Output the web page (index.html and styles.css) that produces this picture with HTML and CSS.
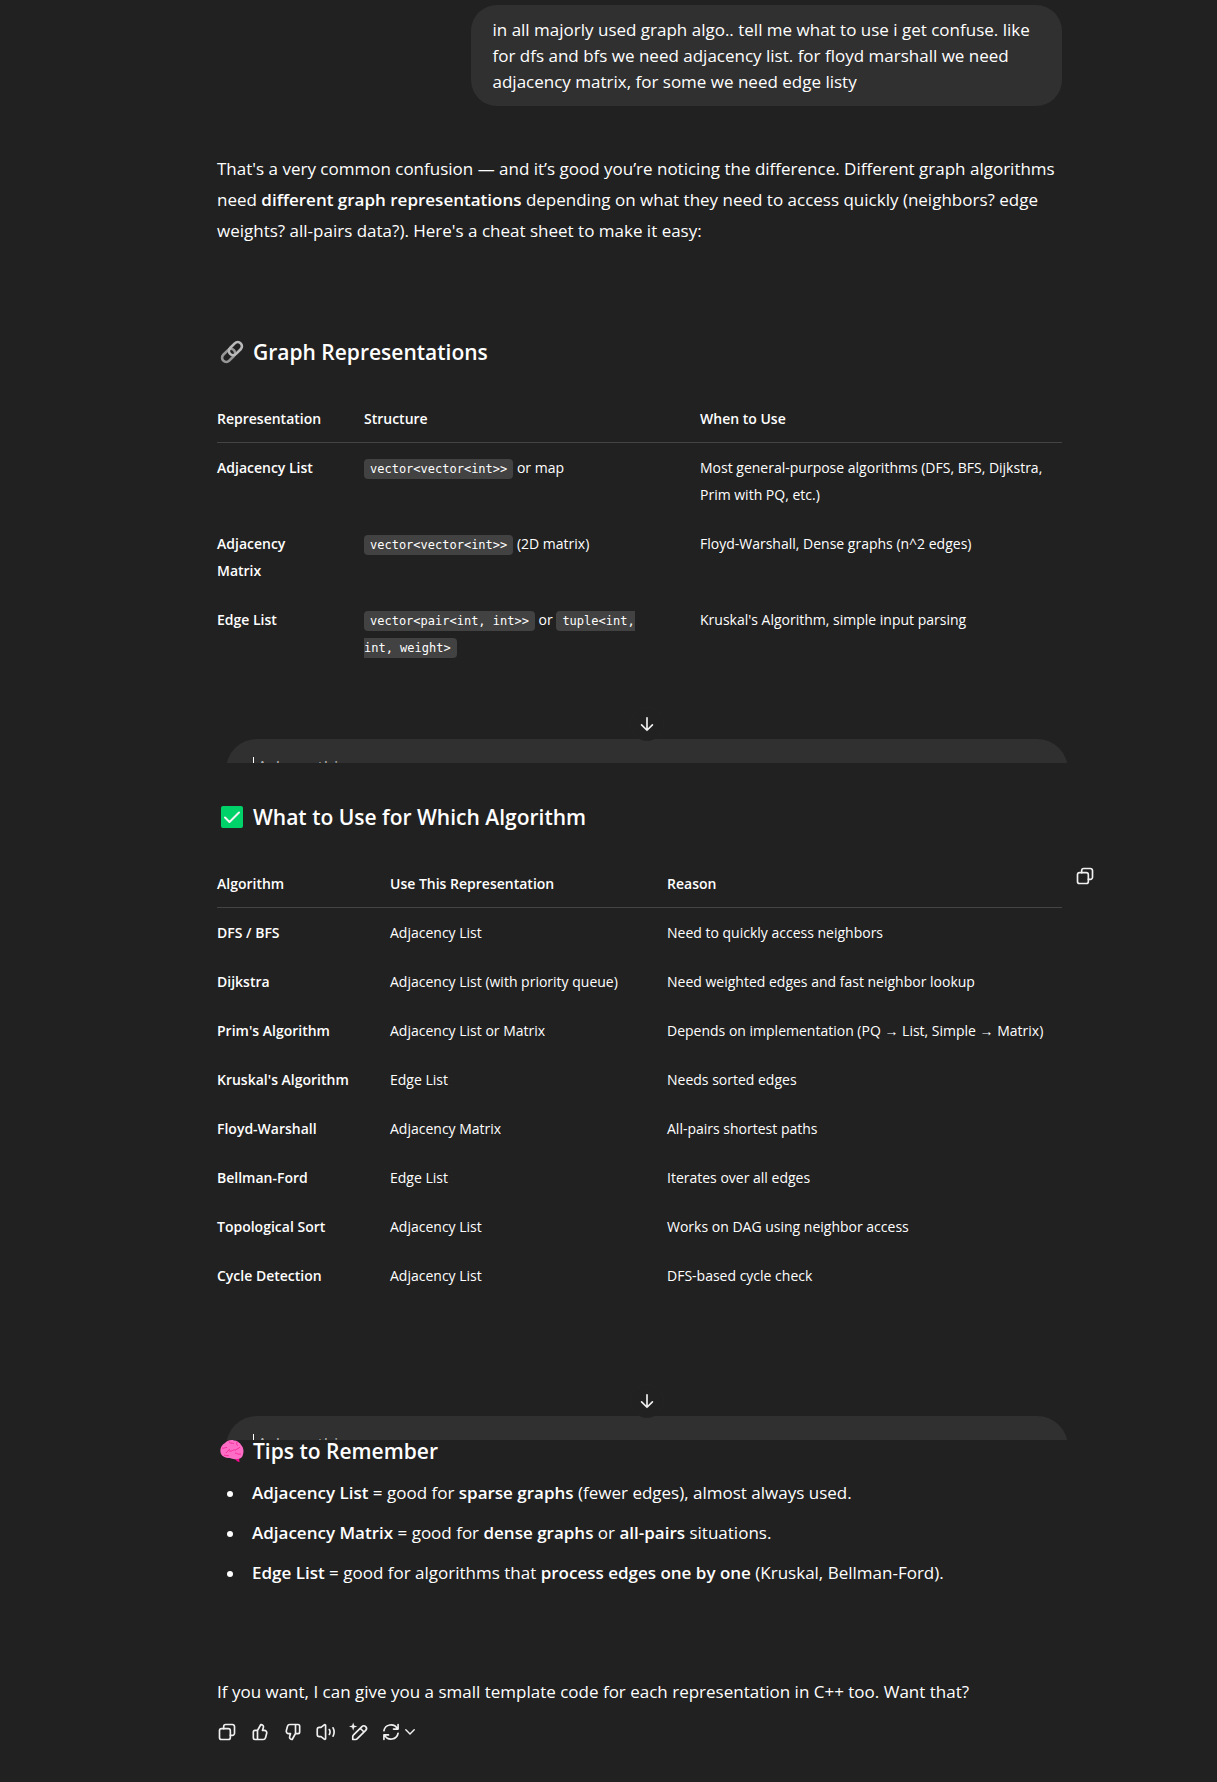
FILE: index.html
```
<!DOCTYPE html>
<html lang="en">
<head>
<meta charset="utf-8">
<meta name="viewport" content="width=device-width, initial-scale=1">
<title>Graph representations</title>
<link rel="stylesheet" href="styles.css">
</head>
<body>
<svg class="sprite" aria-hidden="true">
  <symbol id="i-copy" viewBox="0 0 24 24"><rect x="3" y="8" width="13" height="13" rx="2.5"/><path d="M8 8V5.500A2.500 2.500 0 0 1 10.500 3H18.500A2.500 2.500 0 0 1 21 5.500V13.500A2.500 2.500 0 0 1 18.500 16H16"/></symbol>
  <symbol id="i-thumb" viewBox="0 0 24 24"><path d="M9 10.200 13 3l.5.060C15.600 3.330 16.600 5 15.950 6.900L15 10H17.100C19.100 10 20.500 11.900 19.970 13.800L18.600 18.800A3 3 0 0 1 15.700 21H6A2 2 0 0 1 4 19V12A2 2 0 0 1 6 10H9V21"/></symbol>
  <symbol id="i-arrow" viewBox="0 0 24 24"><path d="M12 4.500V19.500M5.500 13 12 19.500 18.500 13"/></symbol>
</svg>
<main class="thread">
  <p class="bubble">in all majorly used graph algo.. tell me what to use i get confuse. like for dfs and bfs we need adjacency list. for floyd marshall we need adjacency matrix, for some we need edge listy</p>

  <article class="answer">
    <p class="intro">That's a very common confusion — and it’s good you’re noticing the difference. Different graph algorithms need <strong>different graph representations</strong> depending on what they need to access quickly (neighbors? edge weights? all-pairs data?). Here's a cheat sheet to make it easy:</p>

    <h3 class="title title-first">
      <svg class="emoji" viewBox="0 0 22 22" aria-hidden="true"><g fill="none" stroke-width="2.600"><rect x="-7.500" y="-4.200" width="15" height="8.400" rx="4.200" transform="translate(7.600 14.400) rotate(-45)" stroke="#969696"/><rect x="-7.500" y="-4.200" width="15" height="8.400" rx="4.200" transform="translate(14.400 7.600) rotate(-45)" stroke="#b9b9b9"/></g></svg>
      Graph Representations
    </h3>
    <table class="grid grid-structures">
      <colgroup><col class="name"><col class="middle"><col></colgroup>
      <thead><tr><th scope="col">Representation</th><th scope="col">Structure</th><th scope="col">When to Use</th></tr></thead>
      <tbody>
        <tr><th scope="row">Adjacency List</th><td><code>vector&lt;vector&lt;int&gt;&gt;</code> or map</td><td>Most general-purpose algorithms (DFS, BFS, Dijkstra, Prim with PQ, etc.)</td></tr>
        <tr><th scope="row">Adjacency Matrix</th><td><code>vector&lt;vector&lt;int&gt;&gt;</code> (2D matrix)</td><td>Floyd-Warshall, Dense graphs (n^2 edges)</td></tr>
        <tr><th scope="row">Edge List</th><td><code>vector&lt;pair&lt;int, int&gt;&gt;</code> or <code>tuple&lt;int, int, weight&gt;</code></td><td>Kruskal's Algorithm, simple input parsing</td></tr>
      </tbody>
    </table>

    <div class="dock">
      <button class="down" type="button" aria-label="Scroll to bottom"><svg class="icon icon-arrow"><use href="#i-arrow"/></svg></button>
      <div class="peek"><div class="composer"><span class="caret"></span><input class="prompt" type="text" placeholder="Ask anything" aria-label="Message"></div></div>
    </div>

    <h3 class="title title-second">
      <svg class="emoji" viewBox="0 0 22 22" aria-hidden="true"><rect width="22" height="22" rx="2" fill="#00d26a"/><path d="M4 11.500 8.500 16 18 6.500" fill="none" stroke="#f4f4f4" stroke-width="2" stroke-linecap="round" stroke-linejoin="round"/></svg>
      What to Use for Which Algorithm
    </h3>
    <div class="grid-wrap">
      <table class="grid grid-algorithms">
        <colgroup><col class="name"><col class="middle"><col></colgroup>
        <thead><tr><th scope="col">Algorithm</th><th scope="col">Use This Representation</th><th scope="col">Reason</th></tr></thead>
        <tbody>
          <tr><th scope="row">DFS / BFS</th><td>Adjacency List</td><td>Need to quickly access neighbors</td></tr>
          <tr><th scope="row">Dijkstra</th><td>Adjacency List (with priority queue)</td><td>Need weighted edges and fast neighbor lookup</td></tr>
          <tr><th scope="row">Prim's Algorithm</th><td>Adjacency List or Matrix</td><td>Depends on implementation (PQ → List, Simple → Matrix)</td></tr>
          <tr><th scope="row">Kruskal's Algorithm</th><td>Edge List</td><td>Needs sorted edges</td></tr>
          <tr><th scope="row">Floyd-Warshall</th><td>Adjacency Matrix</td><td>All-pairs shortest paths</td></tr>
          <tr><th scope="row">Bellman-Ford</th><td>Edge List</td><td>Iterates over all edges</td></tr>
          <tr><th scope="row">Topological Sort</th><td>Adjacency List</td><td>Works on DAG using neighbor access</td></tr>
          <tr><th scope="row">Cycle Detection</th><td>Adjacency List</td><td>DFS-based cycle check</td></tr>
        </tbody>
      </table>
      <button class="tool copy-table" type="button" aria-label="Copy table"><svg class="icon"><use href="#i-copy"/></svg></button>
    </div>

    <div class="dock dock-late">
      <button class="down" type="button" aria-label="Scroll to bottom"><svg class="icon icon-arrow"><use href="#i-arrow"/></svg></button>
      <div class="peek"><div class="composer"><span class="caret"></span><input class="prompt" type="text" placeholder="Ask anything" aria-label="Message"></div></div>
    </div>

    <h3 class="title title-tips">
      <svg class="emoji" viewBox="0 0 22 22" aria-hidden="true"><path d="M13 17h5l.5 5c-2 0-4-2-5.500-5z" fill="#f70a8d"/><path d="M-.5 12C-1 8 1 4.500 4 3 6 .5 10-.5 13 .5c3 0 6 2 7.500 5 2 2 2.500 6 1.500 9-.5 3-3 4.500-6 4.500-3 .5-5 0-7-1C4 18 0 16-.5 12z" fill="#ff6dc6"/><path d="M1 8c2 1 3-1 5-.5M8 1.500c0 2 3 1.500 5 2M16 2c-1 2 0 3 1 4M5 13c1-2 3-2 3.500-4M8 11c3 1 4-2 7-1 1-2 3-1 4-3M14 13c2 0 3 2 6 1M3 15c2 1 4 0 5 1" fill="none" stroke="#f92f9b" stroke-width="1"/></svg>
      Tips to Remember
    </h3>
    <ul class="tips">
      <li><strong>Adjacency List</strong> = good for <strong>sparse graphs</strong> (fewer edges), almost always used.</li>
      <li><strong>Adjacency Matrix</strong> = good for <strong>dense graphs</strong> or <strong>all-pairs</strong> situations.</li>
      <li><strong>Edge List</strong> = good for algorithms that <strong>process edges one by one</strong> (Kruskal, Bellman-Ford).</li>
    </ul>

    <p class="closing">If you want, I can give you a small template code for each representation in C++ too. Want that?</p>
  </article>

  <div class="tools">
    <button class="tool" type="button" aria-label="Copy"><svg class="icon"><use href="#i-copy"/></svg></button>
    <button class="tool" type="button" aria-label="Good response"><svg class="icon"><use href="#i-thumb"/></svg></button>
    <button class="tool" type="button" aria-label="Bad response"><svg class="icon icon-flip"><use href="#i-thumb"/></svg></button>
    <button class="tool" type="button" aria-label="Read aloud"><svg class="icon" viewBox="0 0 24 24"><path d="M11.500 4.200V19.800C11.500 20.700 10.600 21 9.900 20.500L6 17.500H4A2.500 2.500 0 0 1 1.500 15V9A2.500 2.500 0 0 1 4 6.500H6L9.900 3.500C10.600 3 11.500 3.300 11.500 4.200Z"/><path d="M16 9A6 6 0 0 1 16 15M20.500 7A11 11 0 0 1 20.500 17"/></svg></button>
    <button class="tool" type="button" aria-label="Edit in canvas"><svg class="icon" viewBox="0 0 24 24"><path d="M5.500 15.500 15.500 5.500A3.180 3.180 0 0 1 20 10L10 20A3 3 0 0 1 8 21H4.500V17.500A3 3 0 0 1 5.500 15.500ZM13.500 7.500 18 12"/><path class="solid" d="M5 .5 6.200 4.300 10 5.500 6.200 6.700 5 10.500 3.800 6.700 0 5.500 3.800 4.300Z"/></svg></button>
    <button class="tool tool-menu" type="button" aria-label="Try again"><svg class="icon" viewBox="0 0 24 24"><path d="M3.500 10.500A8.600 8.600 0 0 1 19.500 8M20.500 3V8.500H15M20.500 13.500A8.600 8.600 0 0 1 4.500 16M3.500 21V15.500H9"/></svg><svg class="chevron" viewBox="0 0 10 6"><path d="M.8 .8 5 5 9.200 .8"/></svg></button>
  </div>
</main>
</body>
</html>
```
FILE: styles.css
```
* {
  box-sizing: border-box;
}

body {
  margin: 0;
  padding: 5px 0 34px 62px;
  background: #212121;
  color: #fff;
  font: 17px/31px "Open Sans", "Noto Sans", sans-serif;
}

p,
h3,
ul {
  margin: 0;
}

strong {
  font-weight: 600;
}

button,
input {
  padding: 0;
  border: 0;
  background: none;
  color: inherit;
  font: inherit;
}

.sprite {
  position: absolute;
  width: 0;
  height: 0;
}

.thread {
  display: flex;
  flex-direction: column;
  max-width: 845px;
  margin: 0 auto;
}

.bubble {
  align-self: flex-end;
  max-width: 70%;
  padding: 12px 22px 11px;
  border-radius: 26px;
  background: #303030;
  line-height: 26px;
}

.intro {
  margin-top: 47px;
}

/* Section headings */
.title {
  display: flex;
  align-items: center;
  gap: 10px;
  padding-left: 4px;
  font-size: 21px;
  font-weight: 600;
  line-height: 32px;
}

.title-first {
  margin-top: 90px;
}

.title-second {
  margin-top: 38px;
}

.title-tips {
  margin-top: -5px;
}

.emoji {
  width: 22px;
  height: 22px;
  flex: none;
  overflow: visible;
}

/* Tables */
.grid-wrap {
  position: relative;
}

.grid {
  width: 100%;
  margin-top: 37px;
  border-collapse: separate;
  border-spacing: 0;
  table-layout: fixed;
  font-size: 14px;
  line-height: 27px;
}

.grid th,
.grid td {
  padding: 11px 34px 11px 0;
  text-align: left;
  vertical-align: top;
}

.grid th {
  font-weight: 600;
}

.grid thead th {
  padding-top: 0;
  padding-bottom: 10px;
  border-bottom: 1px solid #444;
}

.grid th:last-child,
.grid td:last-child {
  padding-right: 0;
}

.grid-structures .name {
  width: 147px;
}

.grid-structures .middle {
  width: 336px;
}

.grid-algorithms .name {
  width: 173px;
}

.grid-algorithms .middle {
  width: 277px;
}

code {
  padding: 3px 6px;
  border-radius: 4px;
  background: #424242;
  font: 12px/1 "DejaVu Sans Mono", monospace;
}

/* Message box peeking in between sections */
.dock {
  display: flex;
  flex-direction: column;
  align-items: center;
  margin: 36px -6px 0 9px;
}

.dock-late {
  margin-top: 84px;
}

.down {
  display: grid;
  place-items: center;
  z-index: 1;
  width: 34px;
  height: 34px;
  margin-bottom: -2px;
  border: 1px solid #242424;
  border-radius: 50%;
  background: #212121;
}

.peek {
  width: 100%;
  height: 24px;
  overflow: hidden;
}

.composer {
  display: flex;
  align-items: flex-start;
  height: 64px;
  padding: 16px 27px 0;
  border-radius: 31px;
  background: #303030;
}

.caret {
  flex: none;
  width: 1px;
  height: 20px;
  margin-top: 2px;
  background: #fff;
}

.prompt {
  flex: 1;
  height: 24px;
  padding-left: 3px;
  line-height: 24px;
}

.prompt::placeholder {
  color: #afafaf;
  opacity: 1;
}

/* Tips */
.tips {
  display: flex;
  flex-direction: column;
  gap: 9px;
  margin-top: 10px;
  padding-left: 10px;
  list-style: none;
}

.tips li {
  padding-left: 25px;
  text-indent: -25px;
}

.tips li::before {
  content: "";
  display: inline-block;
  width: 6px;
  height: 6px;
  margin-right: 19px;
  border-radius: 50%;
  background: #fff;
  vertical-align: middle;
}

.closing {
  margin-top: 88px;
}

/* Icon buttons */
.icon {
  width: 20px;
  height: 20px;
  fill: none;
  stroke: #f0f0f0;
  stroke-width: 2;
  stroke-linecap: round;
  stroke-linejoin: round;
}

.icon .solid {
  fill: #f0f0f0;
  stroke: none;
}

.icon-flip {
  transform: rotate(180deg);
}

.tools {
  display: flex;
  margin: 8px 0 0 -7px;
}

.tool {
  display: flex;
  align-items: center;
  justify-content: center;
  width: 33px;
  height: 33px;
}

.tool-menu {
  gap: 4px;
  width: 46px;
}

.chevron {
  width: 10px;
  height: 6px;
  fill: none;
  stroke: #f0f0f0;
  stroke-width: 1.4;
  stroke-linecap: round;
}

.copy-table {
  position: absolute;
  top: -11px;
  left: 100%;
  margin-left: 6px;
}
```
